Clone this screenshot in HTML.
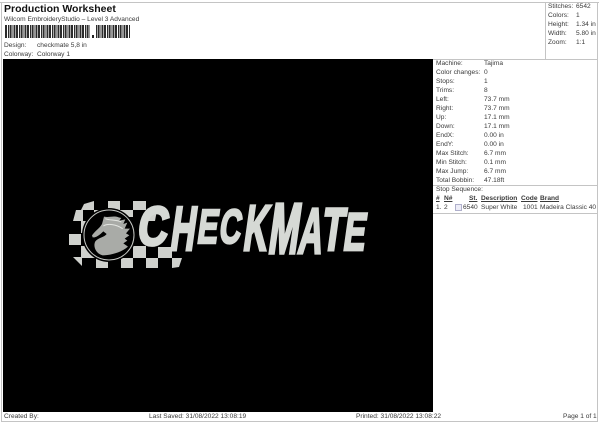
<!DOCTYPE html>
<html><head><meta charset="utf-8"><style>
html,body{margin:0;padding:0;background:#fff}
#p{position:relative;width:600px;height:424px;overflow:hidden;background:#fff;font-family:"Liberation Sans",sans-serif;font-size:6.6px;color:#3a3a3a}
#p div{position:absolute;white-space:nowrap}
.l{position:absolute;background:#c4c4c4}
.r{height:9px;line-height:9px}
</style></head><body><div id="p">
<div class="l" style="left:0;top:2px;width:599px;height:1px"></div>
<div class="l" style="left:545px;top:2px;width:1px;height:57px"></div>
<div class="l" style="left:597px;top:2px;width:1px;height:419px"></div>
<div class="l" style="left:1px;top:2px;width:1px;height:419px"></div>
<div class="l" style="left:433px;top:59px;width:165px;height:1px"></div>
<div class="l" style="left:433px;top:185px;width:165px;height:1px"></div>
<div class="l" style="left:433px;top:213px;width:165px;height:1px"></div>
<div class="l" style="left:1px;top:421px;width:597px;height:1px"></div>
<div style="left:4px;top:3px;font-size:10.5px;font-weight:bold;color:#111;line-height:12px">Production Worksheet</div>
<div class="r" style="left:4px;top:15px">Wilcom EmbroideryStudio – Level 3 Advanced</div>
<svg style="position:absolute;left:5px;top:25px" width="130" height="14"><defs><pattern id="b" width="11" height="13" patternUnits="userSpaceOnUse"><path d="M0 0h2v13H0zM3 0h1v13H3zM4.6 0h2v13H4.6zM7.5 0h1v13H7.5zM9 0h1.4v13H9z" fill="#2c2c2c"/></pattern></defs><rect width="85" height="13" fill="url(#b)"/><rect x="90" width="35" height="13" fill="url(#b)"/><rect x="87" y="10" width="2" height="3" fill="#222"/></svg>
<div class="r" style="left:4px;top:41px">Design:</div><div class="r" style="left:37px;top:41px">checkmate 5,8 in</div>
<div class="r" style="left:4px;top:50px">Colorway:</div><div class="r" style="left:37px;top:50px">Colorway 1</div>

<div class="r" style="left:548px;top:2px">Stitches:</div><div class="r" style="left:576px;top:2px">6542</div>
<div class="r" style="left:548px;top:11px">Colors:</div><div class="r" style="left:576px;top:11px">1</div>
<div class="r" style="left:548px;top:20px">Height:</div><div class="r" style="left:576px;top:20px">1.34 in</div>
<div class="r" style="left:548px;top:29px">Width:</div><div class="r" style="left:576px;top:29px">5.80 in</div>
<div class="r" style="left:548px;top:38px">Zoom:</div><div class="r" style="left:576px;top:38px">1:1</div>

<div class="r" style="left:436px;top:59px">Machine:</div><div class="r" style="left:484px;top:59px">Tajima</div>
<div class="r" style="left:436px;top:68px">Color changes:</div><div class="r" style="left:484px;top:68px">0</div>
<div class="r" style="left:436px;top:77px">Stops:</div><div class="r" style="left:484px;top:77px">1</div>
<div class="r" style="left:436px;top:86px">Trims:</div><div class="r" style="left:484px;top:86px">8</div>
<div class="r" style="left:436px;top:95px">Left:</div><div class="r" style="left:484px;top:95px">73.7 mm</div>
<div class="r" style="left:436px;top:104px">Right:</div><div class="r" style="left:484px;top:104px">73.7 mm</div>
<div class="r" style="left:436px;top:113px">Up:</div><div class="r" style="left:484px;top:113px">17.1 mm</div>
<div class="r" style="left:436px;top:122px">Down:</div><div class="r" style="left:484px;top:122px">17.1 mm</div>
<div class="r" style="left:436px;top:131px">EndX:</div><div class="r" style="left:484px;top:131px">0.00 in</div>
<div class="r" style="left:436px;top:140px">EndY:</div><div class="r" style="left:484px;top:140px">0.00 in</div>
<div class="r" style="left:436px;top:149px">Max Stitch:</div><div class="r" style="left:484px;top:149px">6.7 mm</div>
<div class="r" style="left:436px;top:158px">Min Stitch:</div><div class="r" style="left:484px;top:158px">0.1 mm</div>
<div class="r" style="left:436px;top:167px">Max Jump:</div><div class="r" style="left:484px;top:167px">6.7 mm</div>
<div class="r" style="left:436px;top:176px">Total Bobbin:</div><div class="r" style="left:484px;top:176px">47.18ft</div>
<div class="r" style="left:436px;top:185px">Stop Sequence:</div>

<div class="r" style="left:436px;top:194px;font-weight:bold;text-decoration:underline">#</div>
<div class="r" style="left:444px;top:194px;font-weight:bold;text-decoration:underline">N#</div>
<div class="r" style="left:469px;top:194px;font-weight:bold;text-decoration:underline">St.</div>
<div class="r" style="left:481px;top:194px;font-weight:bold;text-decoration:underline">Description</div>
<div class="r" style="left:521px;top:194px;font-weight:bold;text-decoration:underline">Code</div>
<div class="r" style="left:540px;top:194px;font-weight:bold;text-decoration:underline">Brand</div>
<div class="r" style="left:436px;top:203px">1.</div><div class="r" style="left:444px;top:203px">2</div>
<div style="left:455px;top:204px;width:5px;height:5px;border:1px solid #b0b0cc;background:#eeeef8"></div>
<div class="r" style="left:463px;top:203px">6540</div><div class="r" style="left:481px;top:203px">Super White</div>
<div class="r" style="left:523px;top:203px">1001</div><div class="r" style="left:540px;top:203px">Madeira Classic 40</div>

<svg style="position:absolute;left:3px;top:59px" width="430" height="353" viewBox="3 59 430 353">
<rect x="3" y="59" width="430" height="353" fill="#000"/>
<g fill="#cfd1cd">
<path d="M81 210l3-6 10-3v9zM108 201h12v9h-12zM133 201h13v9h-13z"/>
<path d="M73 221l3-11h7v11zM94 210h14v7H94zM120 210h13v7h-13zM146 210h11l-2 11h-9z"/>
<path d="M81 221h7v12h-7zM69 234h12v11H69z"/>
<path d="M73 257h9v9zM96 258h12v10H96zM121 258h12v10h-12zM146 258h12v10h-12zM172 258h10l-3 9-7 1z"/>
<path d="M81 246h15v12H81zM108 252h13v6h-13zM133 246h13v12h-13zM158 247h14v11h-14z"/>
</g>
<circle cx="109" cy="235" r="27" fill="#000"/>
<circle cx="109" cy="235" r="25" fill="#000" stroke="#c8cac6" stroke-width="1"/>
<g transform="translate(66,198) scale(.3333)">
<path fill="#a9aba7" d="M78 112C88 98 100 92 108 78L114 56C130 60 140 52 158 58L166 60 160 68 178 64 172 78 184 74 176 92 192 92 180 106 190 112 176 122 184 128 172 136 186 146C165 165 130 172 110 172 90 168 80 145 88 130 95 120 115 118 122 108L112 100C100 112 88 120 80 118z"/>
<path fill="none" stroke="#e4e6e2" stroke-width="3" d="M118 62C132 68 150 64 166 72M112 84C125 76 150 78 170 92"/>
</g>
<g font-family="Liberation Sans,sans-serif" font-weight="bold" font-size="100" fill="#d6d9d5" stroke="#d6d9d5" stroke-width="5">
<text transform="translate(136,245) skewX(-8) scale(.42,.55)">C</text>
<text transform="translate(169,250) skewX(-8) scale(.34,.62)">H</text>
<text transform="translate(196,243) skewX(-8) scale(.31,.48)">E</text>
<text transform="translate(218,243) skewX(-8) scale(.30,.48)">C</text>
<text transform="translate(242,250) skewX(-8) scale(.33,.64)">K</text>
<text transform="translate(267,253) skewX(-8) scale(.36,.71)">M</text>
<text transform="translate(297,253) skewX(-8) scale(.33,.64)">A</text>
<text transform="translate(320,250) skewX(-8) scale(.36,.60)">T</text>
<text transform="translate(342,250) skewX(-8) scale(.33,.53)">E</text>
</g>
</svg>

<div class="r" style="left:4px;top:412px">Created By:</div>
<div class="r" style="left:149px;top:412px">Last Saved: 31/08/2022 13:08:19</div>
<div class="r" style="left:356px;top:412px">Printed: 31/08/2022 13:08:22</div>
<div class="r" style="left:563px;top:412px">Page 1 of 1</div>
</div></body></html>
